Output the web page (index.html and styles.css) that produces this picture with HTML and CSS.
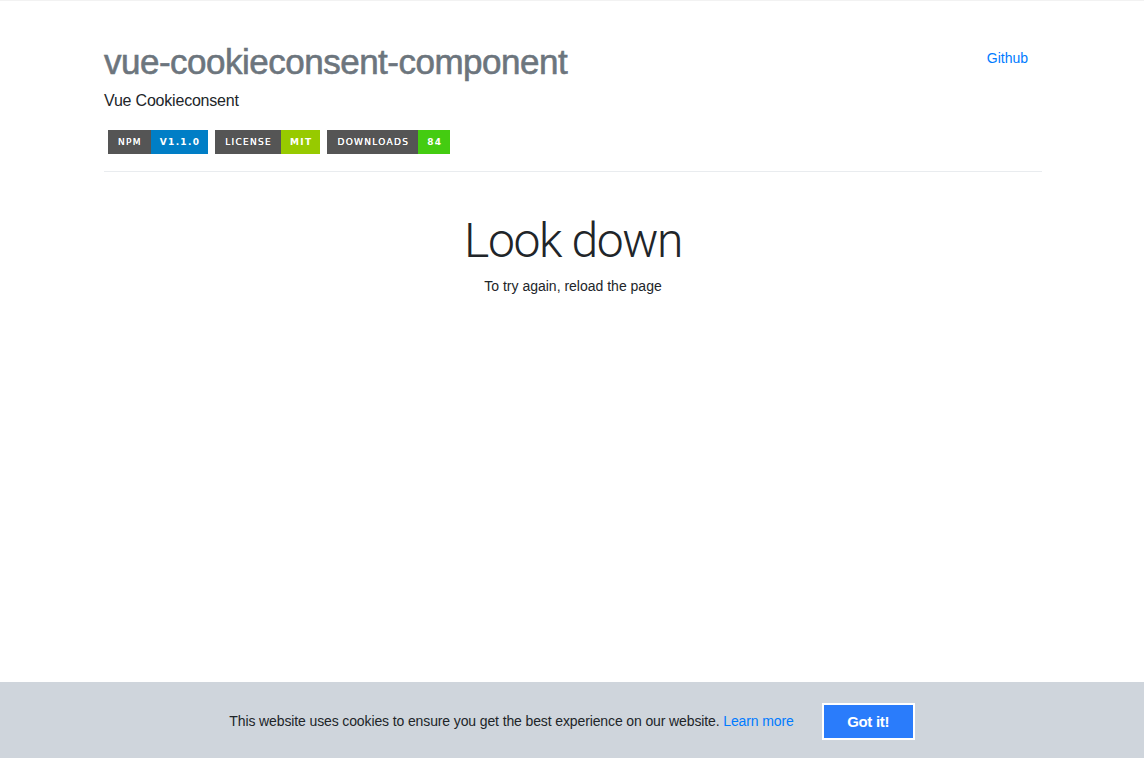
FILE: index.html
```html
<!DOCTYPE html>
<html>
<head>
<meta charset="utf-8">
<link rel="stylesheet" href="styles.css">
</head>
<body>
<div class="page">
  <header class="header">
    <div class="header-main">
      <h1 class="title">vue-cookieconsent-component</h1>
      <p class="subtitle">Vue Cookieconsent</p>
      <div class="badges">
        <span class="badge"><span class="badge-l">NPM</span><span class="badge-r blue">V1.1.0</span></span>
        <span class="badge"><span class="badge-l">LICENSE</span><span class="badge-r lime">MIT</span></span>
        <span class="badge"><span class="badge-l">DOWNLOADS</span><span class="badge-r green">84</span></span>
      </div>
    </div>
    <a class="github" href="#">Github</a>
  </header>
  <hr class="divider">
  <main class="content">
    <h2 class="look">Look down</h2>
    <p class="hint">To try again, reload the page</p>
  </main>
</div>
<div class="cookie">
  <span class="cookie-text">This website uses cookies to ensure you get the best experience on our website. <a href="#" class="learn">Learn more</a></span>
  <button class="got">Got it!</button>
</div>
</body>
</html>
```

FILE: styles.css
```css
* { box-sizing: border-box; }
html, body { margin: 0; padding: 0; }
body {
  font-family: "Liberation Sans", Arial, sans-serif;
  color: #212529;
  background: #fff;
  border-top: 1px solid #f2f2f2;
  height: 758px;
  position: relative;
  overflow: hidden;
}
.page {
  width: 938px;
  margin: 0 auto 0 104px;
}
.header {
  display: flex;
  justify-content: space-between;
  align-items: flex-start;
  padding-top: 41px;
}
.title {
  margin: 0;
  font-size: 35px;
  font-weight: normal;
  -webkit-text-stroke: 0.6px #6c757d;
  color: #6c757d;
  letter-spacing: -0.5px;
  line-height: 40px;
}
.subtitle {
  margin: 9px 0 0;
  font-size: 16px;
  line-height: 20px;
  color: #212529;
  letter-spacing: -0.2px;
}
.badges {
  display: flex;
  gap: 7px;
  margin: 19px 0 0 4px;
}
.badge {
  display: flex;
  height: 24px;
  font-family: "DejaVu Sans", Verdana, sans-serif;
  font-size: 9px;
  letter-spacing: 1.3px;
  color: #fff;
  line-height: 24px;
}
.badge-l {
  background: #555;
  padding: 0 9px 0 10px;
  font-weight: normal;
  text-shadow: 0 0 0.3px #fff;
}
.badge-r {
  padding: 0 8px 0 9px;
  font-weight: bold;
}
.blue { background: #007ec6; }
.lime { background: #97ca00; }
.green { background: #4c1; }
.github {
  color: #007bff;
  text-decoration: none;
  font-size: 14px;
  margin: 8px 14px 0 0;
}
.divider {
  border: 0;
  border-top: 1px solid #e9ecef;
  margin: 17px 0 0;
}
.content {
  text-align: center;
  padding-top: 41px;
}
.look {
  margin: 0;
  font-family: Roboto, "Liberation Sans", sans-serif;
  font-size: 48px;
  font-weight: 300;
  line-height: 56px;
  color: #212529;
  letter-spacing: -1.4px;
}
.hint {
  margin: 7px 0 0;
  font-size: 14px;
  line-height: 20px;
}
.cookie {
  position: absolute;
  left: 0;
  right: 0;
  bottom: 0;
  height: 76px;
  background: #cfd5dc;
  display: flex;
  align-items: center;
  justify-content: center;
  gap: 28px;
  padding-top: 2px;
}
.cookie-text {
  font-size: 14px;
  color: #212529;
  letter-spacing: -0.12px;
}
.learn {
  color: #007bff;
  text-decoration: none;
}
.got {
  width: 93px;
  height: 37px;
  background: #2a7cfb;
  border: 2px solid #fff;
  color: #fff;
  font-family: "Liberation Sans", Arial, sans-serif;
  font-size: 15px;
  font-weight: bold;
  padding: 0;
  letter-spacing: -0.3px;
}
```
